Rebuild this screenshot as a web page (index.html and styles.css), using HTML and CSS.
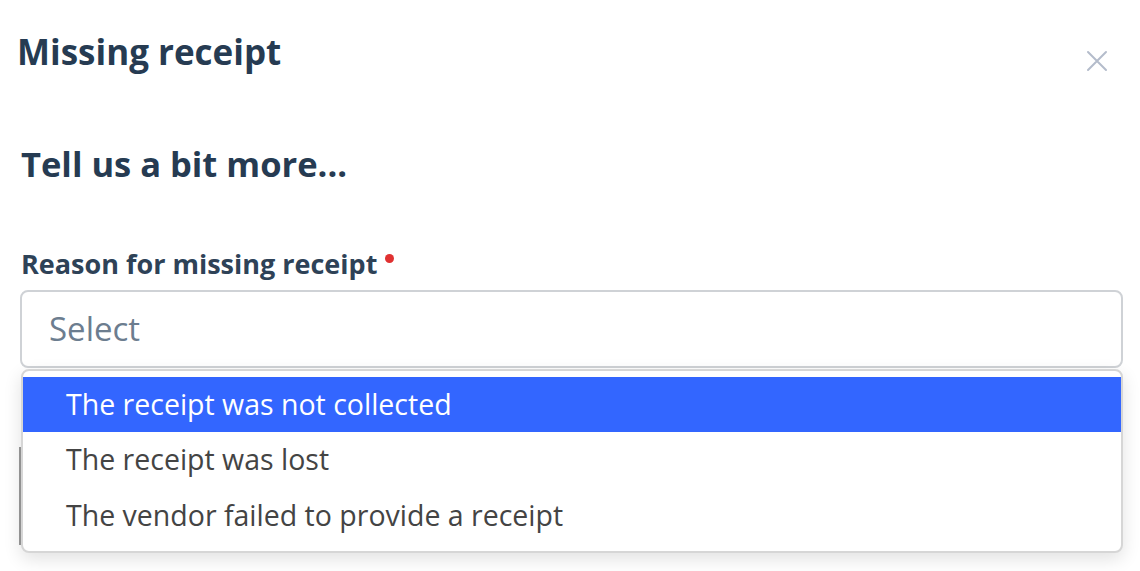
FILE: index.html
```html
<!DOCTYPE html>
<html>
<head>
<meta charset="utf-8">
<link rel="stylesheet" href="styles.css">
</head>
<body>
<div class="modal">
  <div class="header">
    <h1 class="title">Missing receipt</h1>
    <button class="close" aria-label="Close">
      <svg width="22" height="22" viewBox="0 0 22 22"><path d="M2 2L20 20M20 2L2 20" stroke="#b4bccb" stroke-width="2" stroke-linecap="round"/></svg>
    </button>
  </div>
  <h2 class="subtitle">Tell us a bit more...</h2>
  <div class="field">
    <label class="label">Reason for missing receipt<span class="req"></span></label>
    <div class="select">Select</div>
    <div class="under"></div>
    <ul class="menu">
      <li class="opt active">The receipt was not collected</li>
      <li class="opt">The receipt was lost</li>
      <li class="opt">The vendor failed to provide a receipt</li>
    </ul>
  </div>
</div>
</body>
</html>
```
FILE: styles.css
```css
* { box-sizing: border-box; }
html, body { margin: 0; padding: 0; background: #fff; }
body { font-family: "Open Sans", "Lato", sans-serif; color: #263b52; width: 1140px; height: 571px; overflow: hidden; }
.modal { padding: 30px 17px 0 20px; }
.header { display: flex; justify-content: space-between; align-items: flex-start; height: 44px; }
.title { margin: 0 0 0 -3px; font-size: 35px; font-weight: 700; line-height: 44px; letter-spacing: 0; }
.close { border: 0; background: none; padding: 0; margin: 20px 15px 0 0; width: 22px; height: 22px; }
.close svg { display: block; }
.subtitle { margin: 70px 0 0 1px; font-size: 34.5px; font-weight: 700; line-height: 40px; }
.field { position: relative; margin-top: 64px; }
.label { display: flex; align-items: flex-start; margin-left: 1px; font-size: 27px; font-weight: 700; line-height: 32px; color: #2e4257; }
.req { width: 9px; height: 9px; border-radius: 50%; background: #e03131; margin: 6px 0 0 8px; }
.select { margin-top: 10px; height: 78px; border: 2px solid #cfd2d6; border-radius: 8px; padding: 0 27px; font-size: 33px; line-height: 74px; color: #6c7d8f; }
.under { height: 98px; border-left: 2px solid #9a9a9a; border-right: 2px solid #9a9a9a; margin: 79px 0 0 -1px; }
.menu { position: absolute; top: 121px; left: 1px; right: 0; margin: 0; padding: 6px 0 7px; list-style: none; background: #fff; border: 2px solid #d6d6d6; border-radius: 8px; box-shadow: 0 6px 18px rgba(0,0,0,0.12); }
.opt { height: 56px; line-height: 55px; padding-left: 43px; font-size: 28.5px; color: #444; }
.opt.active { background: #3366ff; color: #fff; height: 55px; }
```
